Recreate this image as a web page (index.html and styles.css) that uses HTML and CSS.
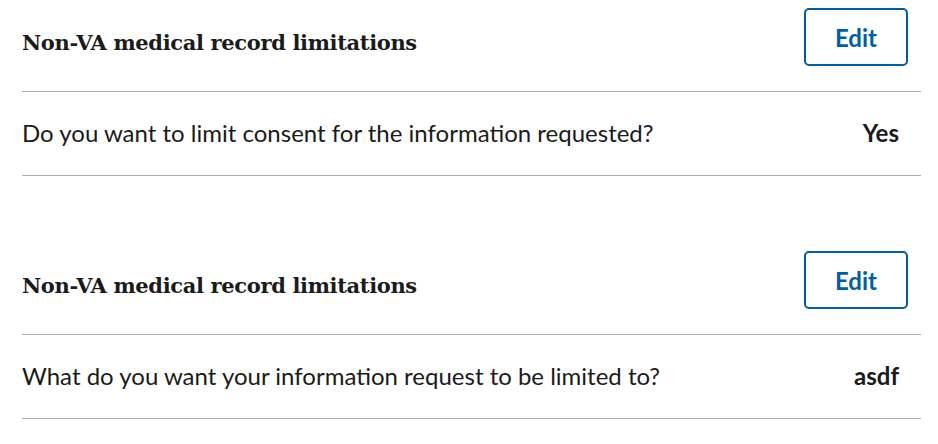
FILE: index.html
```html
<!DOCTYPE html>
<html lang="en">
<head>
<meta charset="utf-8">
<title>Review</title>
<link rel="stylesheet" href="styles.css">
</head>
<body>
<main class="page">
  <section class="review">
    <div class="review-head">
      <h3 class="review-title">Non-VA medical record limitations</h3>
      <button class="edit-btn" type="button">Edit</button>
    </div>
    <dl class="review-row">
      <dt class="review-label">Do you want to limit consent for the information requested?</dt>
      <dd class="review-value">Yes</dd>
    </dl>
  </section>
  <section class="review">
    <div class="review-head">
      <h3 class="review-title">Non-VA medical record limitations</h3>
      <button class="edit-btn" type="button">Edit</button>
    </div>
    <dl class="review-row">
      <dt class="review-label">What do you want your information request to be limited to?</dt>
      <dd class="review-value">asdf</dd>
    </dl>
  </section>
</main>
</body>
</html>
```

FILE: styles.css
```css
html, body {
  margin: 0;
  background: #ffffff;
}
.page {
  padding: 0 17px 0 22px;
  font-family: Lato, "Liberation Sans", sans-serif;
  color: #1b1b1b;
}
.review + .review {
  margin-top: 67px;
}
.review-head {
  display: flex;
  justify-content: space-between;
  align-items: flex-start;
  padding: 8px 13px 25px 0;
  border-bottom: 1px solid #a9aeb1;
}
.review-title {
  margin: 0;
  padding-top: 20px;
  font-family: "DejaVu Serif", "Liberation Serif", serif;
  font-weight: 700;
  font-size: 21px;
  letter-spacing: -0.35px;
  line-height: 30px;
  color: #1b1b1b;
}
.edit-btn {
  width: 104px;
  height: 58px;
  border: 2px solid #005ea2;
  border-radius: 5px;
  background: #ffffff;
  color: #005ea2;
  font-family: Lato, "Liberation Sans", sans-serif;
  font-weight: 700;
  font-size: 24px;
  padding: 0;
}
.review-row {
  display: flex;
  justify-content: space-between;
  align-items: center;
  margin: 0;
  padding: 23px 22px 24px 0;
  border-bottom: 1px solid #a9aeb1;
  font-size: 24px;
  line-height: 36px;
}
.review-label {
  margin: 0;
}
.review-value {
  margin: 0;
  font-weight: 700;
}
```
